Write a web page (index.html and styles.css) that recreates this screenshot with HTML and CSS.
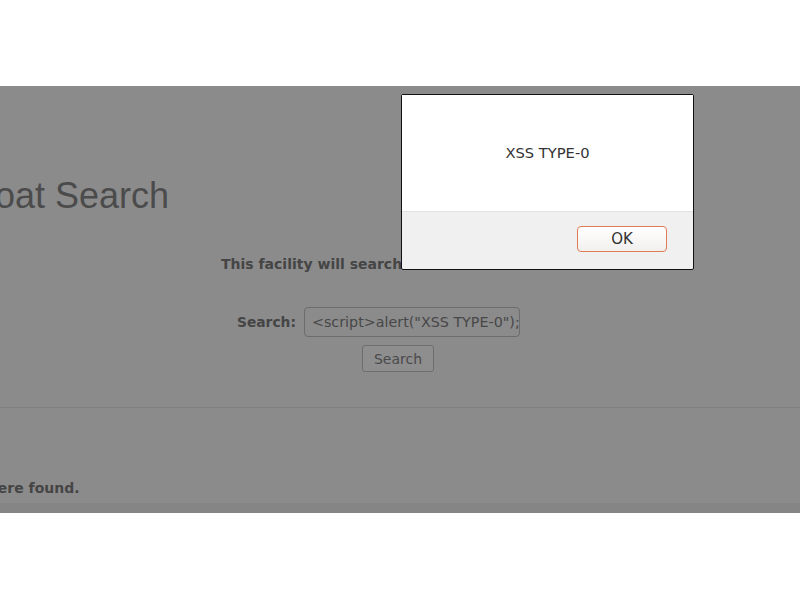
FILE: index.html
```html
<!DOCTYPE html>
<html>
<head>
<meta charset="utf-8">
<link rel="stylesheet" href="styles.css">
</head>
<body>
<div class="viewport">
  <div class="page">
    <h1 class="title">Boat Search</h1>
    <p class="intro">This facility will search the boat database.</p>
    <form class="form">
      <div class="row">
        <label class="label">Search:</label>
        <div class="input">&lt;script&gt;alert("XSS TYPE-0");</div>
      </div>
      <div class="btnrow"><span class="btn">Search</span></div>
    </form>
    <div class="results">
      <p class="none">No matching boats were found.</p>
    </div>
    <div class="footer"></div>
  </div>
  <div class="dialog">
    <div class="dlg-body">XSS TYPE-0</div>
    <div class="dlg-foot"><span class="ok">OK</span></div>
  </div>
</div>
</body>
</html>
```

FILE: styles.css
```css
html, body {
  margin: 0;
  padding: 0;
  background: #ffffff;
}
.viewport {
  position: relative;
  margin-top: 86px;
  height: 427px;
  overflow: hidden;
  background: #8b8b8c;
}
.page {
  display: flex;
  flex-direction: column;
  height: 427px;
}
.title {
  margin: 92px 0 0 -29px;
  font-family: "Liberation Sans", Arial, sans-serif;
  font-weight: normal;
  font-size: 36px;
  line-height: 36px;
  color: #4b4b4b;
  white-space: nowrap;
}
.intro {
  margin: 42px 0 0 221px;
  font-family: "DejaVu Sans", sans-serif;
  font-weight: bold;
  font-size: 14px;
  line-height: 16px;
  color: #454545;
  white-space: nowrap;
}
.form {
  margin: 35px 0 0 0;
}
.row {
  display: flex;
  align-items: center;
  margin-left: 237px;
  gap: 8px;
}
.label {
  font-family: "DejaVu Sans", sans-serif;
  font-weight: bold;
  font-size: 13.8px;
  color: #454545;
}
.input {
  box-sizing: border-box;
  width: 216px;
  height: 30px;
  border: 1px solid #6c6c6c;
  border-radius: 4px;
  padding: 0 0 0 7px;
  font-family: "DejaVu Sans", sans-serif;
  font-size: 14.3px;
  line-height: 28px;
  color: #474747;
  white-space: nowrap;
  overflow: hidden;
}
.btnrow {
  margin: 8px 0 0 362px;
}
.btn {
  display: inline-block;
  box-sizing: border-box;
  width: 72px;
  height: 27px;
  border: 1px solid #6e6e6e;
  border-radius: 3px;
  background: #8e8e8f;
  font-family: "DejaVu Sans", sans-serif;
  font-size: 14px;
  line-height: 26px;
  text-align: center;
  color: #4a4a4a;
}
.results {
  margin-top: 35px;
  border-top: 1px solid #808081;
  height: 95px;
  display: flex;
  align-items: flex-end;
}
.none {
  margin: 0 0 7px -169px;
  font-family: "DejaVu Sans", sans-serif;
  font-weight: bold;
  font-size: 14px;
  line-height: 16px;
  color: #454545;
  white-space: nowrap;
}
.footer {
  flex: 1;
  background: #858586;
}
.dialog {
  position: absolute;
  left: 401px;
  top: 8px;
  width: 293px;
  height: 176px;
  box-sizing: border-box;
  border: 1px solid #111111;
  border-radius: 2px;
  background: #f0f0f0;
  display: flex;
  flex-direction: column;
}
.dlg-body {
  height: 117px;
  background: #ffffff;
  border-bottom: 1px solid #e2e2e2;
  display: flex;
  align-items: center;
  justify-content: center;
  padding-bottom: 2px;
  box-sizing: border-box;
  font-family: "DejaVu Sans", sans-serif;
  font-size: 14.7px;
  color: #333333;
}
.dlg-foot {
  flex: 1;
  display: flex;
  justify-content: flex-end;
  align-items: flex-start;
  padding: 14px 26px 0 0;
}
.ok {
  display: inline-block;
  box-sizing: border-box;
  width: 90px;
  height: 26px;
  border: 1px solid #e07c55;
  border-radius: 4px;
  background: linear-gradient(#ffffff, #f2f0ee);
  font-family: "DejaVu Sans", sans-serif;
  font-size: 15px;
  line-height: 24px;
  text-align: center;
  color: #333333;
}
```
